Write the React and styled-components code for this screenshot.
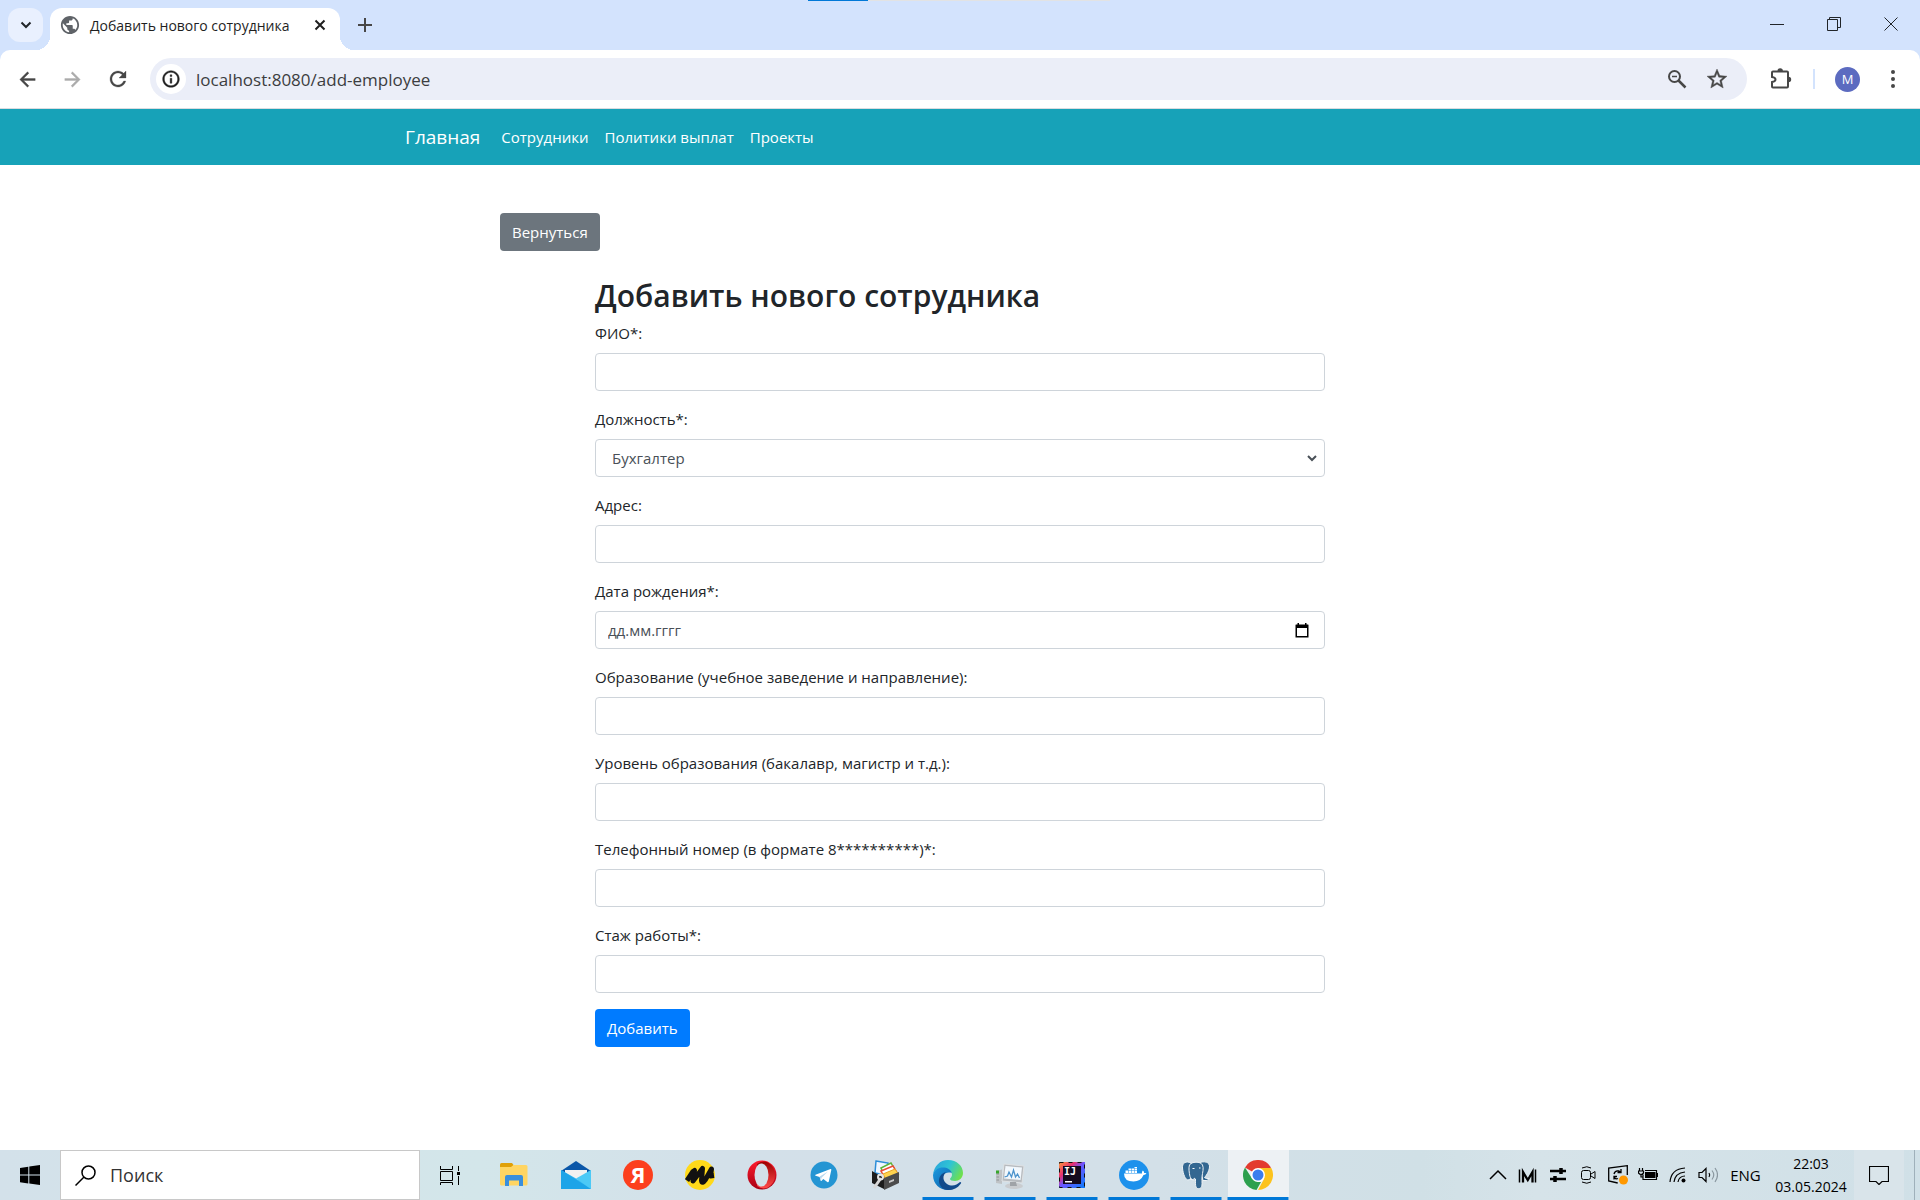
import React from 'react';
import styled, { createGlobalStyle, css } from 'styled-components';

const Global = createGlobalStyle`
  *, *::before, *::after { box-sizing: border-box; }
  body { margin: 0; background: #fff; color: #212529; }
  body, button, input, select { font-family: "Open Sans", "Noto Sans", sans-serif; }
  svg { display: block; flex: none; }
`;

const Screen = styled.div`
  min-height: 100vh;
  display: flex;
  flex-direction: column;
`;

const plainButton = css`
  display: flex;
  align-items: center;
  justify-content: center;
  padding: 0;
  border: 0;
  background: transparent;
  color: inherit;
`;

/* Browser window */
const TabStrip = styled.div`
  height: 50px;
  display: flex;
  align-items: flex-start;
  padding: 0 1px 0 8px;
  background: #d3e3fd;
  position: relative;
`;
const LoadingLine = styled.div`
  position: absolute;
  top: 0;
  left: 42.1%;
  width: 15.7%;
  height: 1px;
  background: linear-gradient(90deg, #0078d7 20%, #e2e3e4 20%);
`;
const TabMenuButton = styled.button`
  ${plainButton}
  width: 35px;
  height: 34px;
  margin-top: 8px;
  border-radius: 12px;
  background: #e9f0fe;
`;
const Tab = styled.div`
  position: relative;
  width: 290px;
  height: 42px;
  margin: 8px 0 0 7px;
  padding: 0 12px 8px 10px;
  display: flex;
  align-items: center;
  border-radius: 12px 12px 0 0;
  background: #fff;
  font-size: 14px;
  color: #1f1f1f;
  &::before, &::after {
    content: "";
    position: absolute;
    bottom: 0;
    width: 14px;
    height: 14px;
  }
  &::before { right: 100%; background: radial-gradient(circle at 0 0, transparent 14px, #fff 14px); }
  &::after { left: 100%; background: radial-gradient(circle at 100% 0, transparent 14px, #fff 14px); }
`;
const TabTitle = styled.span`
  flex: 1;
  margin-left: 10px;
  white-space: nowrap;
`;
const TabAction = styled.button`
  ${plainButton}
  width: ${p => p.$w || 16}px;
  height: ${p => p.$h || 16}px;
`;
const WindowControls = styled.div`
  display: flex;
  margin-left: auto;
`;
const WindowButton = styled.button`
  ${plainButton}
  width: 57px;
  height: 48px;
`;
const ToolbarBack = styled.div`
  background: #d3e3fd;
`;
const Toolbar = styled.div`
  height: 59px;
  display: flex;
  align-items: center;
  padding: 0 5px;
  border-radius: 10px 10px 0 0;
  border-bottom: 1px solid #dadce0;
  background: #fff;
  color: #474747;
`;
const ToolButton = styled.button`
  ${plainButton}
  width: ${p => p.$w || 45}px;
  height: 36px;
  opacity: ${p => (p.disabled ? 0.45 : 1)};
`;
const Omnibox = styled.div`
  flex: 1;
  height: 42px;
  margin: 0 11px 0 10px;
  padding: 0 10px 0 6px;
  display: flex;
  align-items: center;
  border-radius: 21px;
  background: #ebeef8;
`;
const SiteInfo = styled.button`
  ${plainButton}
  width: 30px;
  height: 30px;
  border-radius: 50%;
  background: #fff;
  color: #1f1f1f;
`;
const Address = styled.input`
  flex: 1;
  min-width: 0;
  margin-left: 10px;
  padding: 0;
  border: 0;
  outline: 0;
  background: transparent;
  font-size: 17px;
  color: #3c3d40;
`;
const Divider = styled.span`
  width: 2px;
  height: 20px;
  margin: 0 10px;
  background: #d3e3fd;
`;
const Avatar = styled.span`
  width: 25px;
  height: 25px;
  display: grid;
  place-items: center;
  border-radius: 50%;
  background: #5c6bc0;
  color: #fff;
  font-size: 13px;
`;

/* Site */
const NavBar = styled.nav`
  height: 56px;
  background: #17a2b8;
`;
const NavInner = styled.div`
  max-width: 1140px;
  height: 100%;
  margin: 0 auto;
  padding: 0 15px;
  display: flex;
  align-items: center;
`;
const Brand = styled.a`
  margin-right: 21px;
  font-size: 19px;
  line-height: 30px;
  color: #fff;
  text-decoration: none;
`;
const NavLinks = styled.div`
  display: flex;
  gap: 16px;
`;
const NavLink = styled.a`
  font-size: 15px;
  line-height: 24px;
  color: #fff;
  text-decoration: none;
`;
const Main = styled.main`
  flex: 1;
  width: 100%;
  max-width: 950px;
  margin: 0 auto;
  padding: 48px 15px;
`;
const Button = styled.button`
  height: 38px;
  padding: 0 12px;
  border: 0;
  border-radius: 4px;
  background: ${p => (p.$primary ? '#007bff' : '#6c757d')};
  color: #fff;
  font-size: 15px;
  line-height: 24px;
`;
const Form = styled.form`
  max-width: 730px;
  margin: 24px auto 0;
`;
const Title = styled.h2`
  margin: 0 0 4px;
  font-size: 30px;
  line-height: 42px;
  font-weight: 600;
`;
const Field = styled.div`
  margin-bottom: 16px;
`;
const Label = styled.label`
  display: block;
  margin-bottom: 8px;
  font-size: 15px;
  line-height: 24px;
`;
const control = css`
  width: 100%;
  height: 38px;
  border: 1px solid #ced4da;
  border-radius: 4px;
  background: #fff;
  color: #495057;
  font-size: 15px;
`;
const TextInput = styled.input`
  ${control}
  padding: 6px 12px;
`;
const SelectBox = styled.div`
  ${control}
  display: flex;
  padding-right: 4px;
`;
const Select = styled.select`
  flex: 1;
  min-width: 0;
  padding: 0 12px;
  border: 0;
  background: transparent;
  color: inherit;
  font-size: 15px;
`;
const DateBox = styled.div`
  ${control}
  display: flex;
  align-items: center;
  padding: 0 12px;
`;
const DateInput = styled.input`
  flex: 1;
  min-width: 0;
  padding: 0;
  border: 0;
  outline: 0;
  background: transparent;
  color: inherit;
  font-size: 15px;
  &::placeholder { color: #495057; opacity: 1; }
`;
const DateButton = styled.button`
  ${plainButton}
  width: 20px;
  height: 20px;
  color: #000;
`;

/* Taskbar */
const Taskbar = styled.footer`
  height: 50px;
  display: flex;
  background: linear-gradient(90deg, #d3e1ea 0%, #d3e6ea 25%, #d3e0e9 38%, #d3e0e8 60%, #d0e0e6 74%, #d6e3e9 80%, #d0e0e7 100%);
  color: #000;
`;
const StartButton = styled.button`
  ${plainButton}
  width: 60px;
`;
const SearchBox = styled.label`
  width: 360px;
  display: flex;
  align-items: center;
  padding-left: 14px;
  border: 1px solid #c8c8c8;
  background: #fff;
`;
const SearchInput = styled.input`
  flex: 1;
  min-width: 0;
  margin-left: 14px;
  padding: 0;
  border: 0;
  outline: 0;
  font-size: 18px;
  &::placeholder { color: #333; opacity: 1; }
`;
const Apps = styled.div`
  display: flex;
  margin-left: 3px;
`;
const AppButton = styled.button`
  ${plainButton}
  width: 62px;
  position: relative;
  background: ${p => (p.$active ? 'linear-gradient(#edf1f4, #edf1f4) center / 61px 100% no-repeat' : 'transparent')};
  &::after {
    content: "";
    display: ${p => (p.$running || p.$active ? 'block' : 'none')};
    position: absolute;
    bottom: 0;
    left: 50%;
    width: ${p => (p.$active ? 61 : 51)}px;
    height: 3px;
    transform: translateX(-50%);
    background: #0078d7;
  }
`;
const Tray = styled.div`
  display: flex;
  align-items: stretch;
  margin-left: auto;
`;
const TrayButton = styled.button`
  ${plainButton}
  width: ${p => p.$w || 30}px;
  font-size: 15px;
`;
const Clock = styled.button`
  ${plainButton}
  width: 86px;
  flex-direction: column;
  font-size: 14px;
  line-height: 23px;
`;
const Notifications = styled(TrayButton)`
  margin-right: 10px;
  background: #d9e4ea;
`;
const ShowDesktop = styled.button`
  ${plainButton}
  width: 6px;
  border-left: 1px solid #9fb0ba;
`;

const Glyph = ({ d, size = 24, bold = 0 }) => (
  <svg width={size} height={size} viewBox="0 0 24 24" fill="currentColor" stroke="currentColor" strokeWidth={bold}><path d={d} /></svg>
);
const Line = ({ w = 20, h = 20, sw = 1, children }) => (
  <svg width={w} height={h} viewBox={`0 0 ${w} ${h}`} fill="none" stroke="currentColor" strokeWidth={sw}>{children}</svg>
);
const AppSvg = ({ children }) => <svg width="30" height="30" viewBox="0 0 30 30">{children}</svg>;

const paths = {
  back: 'M20 11H7.83l5.59-5.59L12 4l-8 8 8 8 1.41-1.41L7.83 13H20v-2z',
  forward: 'M12 4l-1.41 1.41L16.17 11H4v2h12.17l-5.58 5.59L12 20l8-8z',
  reload: 'M17.65 6.35C16.2 4.9 14.21 4 12 4c-4.42 0-7.99 3.58-7.99 8s3.57 8 7.99 8c3.73 0 6.84-2.55 7.73-6h-2.08c-.82 2.33-3.04 4-5.65 4-3.31 0-6-2.69-6-6s2.69-6 6-6c1.66 0 3.14.69 4.22 1.78L13 11h7V4l-2.35 2.35z',
  info: 'M11 7h2v2h-2zm0 4h2v6h-2zm1-9C6.48 2 2 6.48 2 12s4.48 10 10 10 10-4.48 10-10S17.52 2 12 2zm0 18c-4.41 0-8-3.59-8-8s3.59-8 8-8 8 3.59 8 8-3.59 8-8 8z',
  star: 'M22 9.24l-7.19-.62L12 2 9.19 8.63 2 9.24l5.46 4.73L5.82 21 12 17.27 18.18 21l-1.63-7.03L22 9.24zM12 15.4l-3.76 2.27 1-4.28-3.32-2.88 4.38-.38L12 6.1l1.71 4.04 4.38.38-3.32 2.88 1 4.28L12 15.4z',
  globe: 'M12 2C6.48 2 2 6.48 2 12s4.48 10 10 10 10-4.48 10-10S17.52 2 12 2zm-1 17.93c-3.95-.49-7-3.85-7-7.93 0-.62.08-1.21.21-1.79L9 15v1c0 1.1.9 2 2 2v1.93zm6.9-2.54c-.26-.81-1-1.39-1.9-1.39h-1v-3c0-.55-.45-1-1-1H8v-2h2c.55 0 1-.45 1-1V7h2c1.1 0 2-.9 2-2v-.41c2.93 1.19 5 4.06 5 7.41 0 2.08-.8 3.97-2.1 5.39z',
};

const icons = {
  explorer: (
    <AppSvg>
      <path d="M1 4.500q0-1.500 1.500-1.500H13l1.500 2-1.500 3H1z" fill="#e0a008" />
      <path d="M1 7h11l2.500-2H27q1.500 0 1.500 1.500V24q0 1.500-1.500 1.500H2.500Q1 25.500 1 24z" fill="#ffd562" />
      <path d="M6 26V17q0-2 2-2h14q2 0 2 2v9h-4v-5.500h-10V26z" fill="#3a8fdc" />
    </AppSvg>
  ),
  mail: (
    <AppSvg>
      <path d="M0 11 15 1l15 10v4H0z" fill="#0a57a8" />
      <path d="M4 10h22v10H4z" fill="#f1f1f1" />
      <path d="M0 10v19h30V10L16.500 19.500 15 18.500z" fill="#35b9f1" />
      <path d="M0 10 30 29H0z" fill="#1da4e8" />
      <path d="M30 10v19L15 18.500z" fill="#4cc9f6" />
    </AppSvg>
  ),
  yandex: (
    <AppSvg>
      <circle cx="15" cy="15" r="15" fill="#fc3f1d" />
      <text x="15" y="23" textAnchor="middle" fontSize="22" fontWeight="700" fontFamily="Open Sans, sans-serif" fill="#fff">Я</text>
    </AppSvg>
  ),
  music: (
    <AppSvg>
      <circle cx="15" cy="15" r="15" fill="#ffd91a" />
      <path d="M2 20.500 8 11.500 9.500 10.500 8 21 17.500 8.500 16.500 20.500 Q17 24.500 20.500 19.500L26.500 9 25.500 16 29 15.500" fill="none" stroke="#111" strokeWidth="5" strokeLinejoin="round" />
    </AppSvg>
  ),
  opera: (
    <AppSvg>
      <defs>
        <linearGradient id="op1" x1="0" y1="0" x2="0" y2="1"><stop offset="0" stopColor="#ff1b2d" /><stop offset="1" stopColor="#a70014" /></linearGradient>
        <linearGradient id="op2" x1="0" y1="0" x2="0" y2="1"><stop offset="0" stopColor="#9c0000" /><stop offset="1" stopColor="#ff4b4b" /></linearGradient>
      </defs>
      <circle cx="15" cy="15" r="14.500" fill="url(#op1)" />
      <path d="M10 4Q16 0 21 2.500A14.500 14.500 0 0 1 21 27.500Q15 30 10 26z" fill="url(#op2)" />
      <ellipse cx="14.500" cy="15" rx="7" ry="11.500" fill="#d3e0e9" />
    </AppSvg>
  ),
  telegram: (
    <AppSvg>
      <circle cx="15" cy="15" r="13.500" fill="#2495d3" />
      <path d="M6.500 14.800 21.500 9q1-.2.800 1l-2.500 11.500q-.4 1-1.500.4l-4-3-2 2q-.5.400-.7-.300l-1-3.700-4-1.200q-1-.4-.1-.9z" fill="#fff" />
      <path d="M10.700 16.500 19 11.500l-6.500 6.200-.6 3z" fill="#b9d9ee" />
    </AppSvg>
  ),
  organizer: (
    <AppSvg>
      <path d="m5 1 12 2-3 12-10-2z" fill="#eef6ff" stroke="#2c8ed8" strokeWidth="1.500" />
      <path d="m10 8 10-5 4 7-10 6z" fill="#fff" stroke="#5eb53c" strokeWidth="1.500" />
      <path d="m10 11 12-5 4 7-12 5z" fill="#fff" stroke="#e94b35" strokeWidth="1.500" />
      <path d="m12 14 12-5 4 6-13 5z" fill="#ffd34f" stroke="#e8a522" />
      <path d="m1 11 12 7v11L1 23z" fill="#1c1c1c" />
      <path d="m13 18 15-6v11l-15 7z" fill="#4c4c4c" />
      <path d="m18 21 5-2v2l-5 2z" fill="#ccc" />
      <path d="m3 28 7-10" stroke="#d8d8d8" strokeWidth="3" />
      <circle cx="9.500" cy="17" r="2.500" fill="none" stroke="#e5e5e5" strokeWidth="2" />
    </AppSvg>
  ),
  edge: (
    <AppSvg>
      <defs>
        <linearGradient id="ed1" x1="0" y1=".2" x2="1" y2=".6"><stop offset="0" stopColor="#2aa5dc" /><stop offset=".5" stopColor="#2fc4d4" /><stop offset="1" stopColor="#6fe04c" /></linearGradient>
        <linearGradient id="ed2" x1="0" y1="0" x2="1" y2="1"><stop offset="0" stopColor="#1b9be0" /><stop offset="1" stopColor="#0c59a4" /></linearGradient>
      </defs>
      <path d="M0 15C1 6 7 0 15 0c9 0 15 6 15 13 0 5-4 8-8 8-3 0-5-1-5-2 0-1 2-2 2-4 0-4-4-7-9-7C5 8 1 11 0 15z" fill="url(#ed1)" />
      <path d="M0 15C1 10 5 7.500 10 7.500c4 0 8 2 8.800 5.500C12 11 8 16 10 21c2 5 7 7 11 6.500Q18 30 15 30C7 30 0 24 0 15z" fill="url(#ed2)" />
      <path d="M13 12c-4 4-3 9 1 12 5 3 10 1 13-2q2 0 .5 2c-3 4-7 6-12 6C9 30 6 25 6 21c0-5 3-8 7-9z" fill="#114a8b" />
    </AppSvg>
  ),
  monitor: (
    <AppSvg>
      <path d="m1 11 6-1.500V24l-6-1z" fill="#bfc3c6" />
      <path d="M1.500 14H4M1.500 17H4M1.500 20H4" stroke="#8f9498" />
      <path d="M1 10.500h3v3H1z" fill="#37a72d" />
      <path d="m9 4 20 2-2 17-20-2z" fill="#b7bbbf" stroke="#dfe2e4" />
      <path d="m10.500 6 16.500 1.500-1.500 12.500L9 18.500z" fill="#f2f8fd" />
      <path d="m9.500 17 3-1 1.500-4 2.500 5 2-7 2 7 2-3 2 4" fill="none" stroke="#4c93cc" strokeWidth="1.300" />
      <ellipse cx="19" cy="26" rx="9" ry="3" fill="#c9cccf" />
      <path d="M15 22h6l1 4h-7z" fill="#9fa3a7" />
    </AppSvg>
  ),
  idea: (
    <AppSvg>
      <defs>
        <linearGradient id="ij" x1="0" y1="0" x2="1" y2="1"><stop offset="0" stopColor="#fc9a3c" /><stop offset=".3" stopColor="#e82f6e" /><stop offset=".5" stopColor="#6b57ff" /><stop offset="1" stopColor="#087cfa" /></linearGradient>
      </defs>
      <path d="M2 2h26v26H2z" fill="url(#ij)" />
      <path d="M2.500 2.500h25v25h-25z" fill="none" stroke="#111" strokeDasharray="4 5" />
      <path d="M6 6h18v18H6z" fill="#140a1e" />
      <text x="7" y="15" fontSize="10" fontWeight="700" fontFamily="DejaVu Sans Mono, monospace" fill="#fff">IJ</text>
      <path d="M8 21h7v1.500H8z" fill="#fff" />
    </AppSvg>
  ),
  docker: (
    <AppSvg>
      <circle cx="15" cy="15" r="15" fill="#1d91ec" />
      <path d="M5 13.500h18q-.5-1.500.8-3 1.400.9 1.400 2.500 1.400-.3 2.300.3-.8 1.700-3 1.700-2.800 6.500-10 6.500-9.500 0-9.500-8z" fill="#fff" />
      <path d="M6.500 10.500h2.500v2.500H6.500zM9.500 10.500h2.500v2.500H9.500zM12.500 10.500H15v2.500h-2.500zM15.500 10.500H18v2.500h-2.500zM9.500 8.500h2.500V10H9.500zM12.500 8.500H15V10h-2.500zM15.500 8.500H18V10h-2.500zM15.500 7H18v1h-2.500z" fill="#fff" />
    </AppSvg>
  ),
  postgres: (
    <AppSvg>
      <g fill="#336791" stroke="#eef3f6" strokeWidth="1">
        <path d="M10 3C5 .5 1 3 1.500 8c.5 6 3 12 5.500 12 2 0 3-2.500 3.500-4z" />
        <path d="M18 3c5-2.500 11-1 10.500 4-.4 5-4 9.500-5 10.500q1 1.500 5 1-2 3-6.500 2z" />
        <path d="M8.500 5c2-3.500 11-4 13 0 1.500 3 0 8-.5 11.500-.3 2 .5 9-.5 10.500-1 2-4.500 2.500-5.500 0-.7-2-.5-5-.5-8-2 2-4.500.5-5.500-2.500-1-4-1.500-9-.5-11.500z" />
      </g>
      <path d="M11.500 8.500h2M18 8h1.500" stroke="#fff" strokeWidth="1.200" />
      <path d="M9 19q3 2 5-1" fill="none" stroke="#eef3f6" />
    </AppSvg>
  ),
  chrome: (
    <AppSvg>
      <path d="M15 15 2 7.500A15 15 0 0 1 28 7.500z" fill="#e33b2e" />
      <path d="M15 8h13.300A15 15 0 0 1 15 30l6-11z" fill="#fcc31e" />
      <path d="M2 7.500 9 18.500 15 22l3 0-4.500 8A15 15 0 0 1 2 7.500z" fill="#2da04e" />
      <circle cx="15" cy="15" r="7" fill="#fff" />
      <circle cx="15" cy="15" r="5.500" fill="#3b7ded" />
    </AppSvg>
  ),
};

const apps = [
  ['explorer', 'Проводник'], ['mail', 'Почта'], ['yandex', 'Яндекс'], ['music', 'Музыка'], ['opera', 'Opera'],
  ['telegram', 'Telegram'], ['organizer', 'Органайзер'], ['edge', 'Edge', 'running'], ['monitor', 'Монитор', 'running'],
  ['idea', 'IntelliJ IDEA', 'running'], ['docker', 'Docker', 'running'], ['postgres', 'PostgreSQL', 'running'],
  ['chrome', 'Chrome', 'active'],
];

const trayIcons = [
  ['Скрытые значки', <Line><path d="m2 14 8-8 8 8" strokeWidth="1.500" /></Line>],
  ['Монитор', <Line><path d="M1.500 4.500v13M17.500 4.500v13" strokeWidth="1.500" /><path d="M5 17.500V7l4.800 8L14.500 7v10.500" strokeWidth="2.300" /></Line>],
  ['Настройки', <Line><path d="M2 6h16M2 14h16" strokeWidth="2.500" /><path d="M13 3v6M7 11v6" strokeWidth="3.500" /></Line>],
  ['Камера', <Line><rect x="3.500" y="5.500" width="9" height="9" rx="2" /><path d="m13 9 4-2.500v7L13 11M4 3q5-2.500 9 0M4 17q5 2.500 9 0" /></Line>],
  ['Обновления', <Line><path d="M19.300 10V.700L.7 3v13l9 2" strokeWidth="1.300" /><path d="M6 9q1-4 5-3l2 1m0-3v3.500H9.500M6 14.500v-3h3M6 12.500q2 2 4 1" strokeWidth="1.300" /><circle cx="15.500" cy="15" r="4.500" fill="#ff9800" stroke="none" /></Line>],
  ['Батарея', <Line><rect x="7" y="7" width="10.500" height="6" fill="#000" stroke="none" /><path d="M5 9.500v5h13.500v-9H7M19.500 8v4M1.500 3v3M4.500 3v3M.5 6h5v2q-2.500 3-5 0zM3 9v3h2" strokeWidth="1.200" /></Line>],
  ['Сеть', <Line><path d="M2 17Q3 4 17 3M6 17Q7 8 17 7M10 17q1-6 7-6" strokeWidth="1.200" /><circle cx="15.500" cy="15.500" r="2" fill="#000" stroke="none" /></Line>],
  ['Громкость', <Line><path d="M1 7.500h3l4-4v13l-4-4H1zM11 8q1.500 2 0 4" strokeWidth="1.200" /><path d="M14 5.500q3.500 4.500 0 9M17 3q5 7 0 14" stroke="#8a979f" strokeWidth="1.200" /></Line>],
];

const fields = [
  { id: 'name', label: 'ФИО*:' },
  { id: 'position', label: 'Должность*:', type: 'select' },
  { id: 'address', label: 'Адрес:' },
  { id: 'birth', label: 'Дата рождения*:', type: 'date' },
  { id: 'education', label: 'Образование (учебное заведение и направление):' },
  { id: 'degree', label: 'Уровень образования (бакалавр, магистр и т.д.):' },
  { id: 'phone', label: 'Телефонный номер (в формате 8**********)*:' },
  { id: 'experience', label: 'Стаж работы*:' },
];

function Control({ id, type }) {
  if (type === 'select') {
    return <SelectBox><Select id={id}><option>Бухгалтер</option></Select></SelectBox>;
  }
  if (type === 'date') {
    return (
      <DateBox>
        <DateInput id={id} placeholder="дд.мм.гггг" />
        <DateButton type="button" aria-label="Календарь">
          <svg width="14" height="15" viewBox="0 0 14 15"><path d="M2.500 0H4v1.500h6V0h1.500v1.500H13q.5 0 .5.500v12.500H.5V2q0-.5.5-.5h1.500zM2 5v8h10V5z" fill="currentColor" fillRule="evenodd" /></svg>
        </DateButton>
      </DateBox>
    );
  }
  return <TextInput id={id} />;
}

export default function App() {
  return (
    <Screen>
      <Global />
      <header>
        <TabStrip>
          <LoadingLine />
          <TabMenuButton aria-label="Поиск вкладок">
            <Line w={12} h={8} sw={2}><path d="m1.500 1.500 4.500 4.500 4.500-4.500" /></Line>
          </TabMenuButton>
          <Tab>
            <svg width="20" height="20" viewBox="1 1 22 22" fill="#5f6368"><path d={paths.globe} /></svg>
            <TabTitle>Добавить нового сотрудника</TabTitle>
            <TabAction aria-label="Закрыть вкладку"><Line w={12} h={12} sw={2}><path d="m1.500 1.500 9 9m0-9-9 9" /></Line></TabAction>
          </Tab>
          <TabAction $w={50} $h={50} aria-label="Новая вкладка"><Line w={14} h={14} sw={2}><path d="M7 0v14M0 7h14" stroke="#474747" /></Line></TabAction>
          <WindowControls>
            <WindowButton aria-label="Свернуть"><Line w={14} h={14}><path d="M0 7.500h14" /></Line></WindowButton>
            <WindowButton aria-label="Восстановить"><Line w={14} h={14}><path d="M.5 2.500h10v11H.5zM2.500 2.500v-2h11v10h-3" /></Line></WindowButton>
            <WindowButton aria-label="Закрыть"><Line w={14} h={14}><path d="m.5.500 13 13m0-13-13 13" /></Line></WindowButton>
          </WindowControls>
        </TabStrip>
        <ToolbarBack>
          <Toolbar>
            <ToolButton aria-label="Назад"><Glyph d={paths.back} size={23} bold={0.4} /></ToolButton>
            <ToolButton aria-label="Вперёд" disabled><Glyph d={paths.forward} size={23} bold={0.4} /></ToolButton>
            <ToolButton aria-label="Обновить"><Glyph d={paths.reload} size={24} bold={0.3} /></ToolButton>
            <Omnibox>
              <SiteInfo aria-label="Сведения о сайте"><Glyph d={paths.info} size={20} bold={0.5} /></SiteInfo>
              <Address aria-label="Адрес" defaultValue="localhost:8080/add-employee" />
              <ToolButton $w={40} aria-label="Масштаб"><Line sw={2}><circle cx="7.500" cy="7.500" r="5.500" /><path d="m11.500 11.500 7 7" strokeWidth="2.500" /><path d="M5 7.500h5" strokeWidth="1.500" /></Line></ToolButton>
              <ToolButton $w={40} aria-label="В закладки"><Glyph d={paths.star} size={24} bold={0.4} /></ToolButton>
            </Omnibox>
            <ToolButton aria-label="Расширения">
              <Line w={22} h={22} sw={2}>
                <path d="M2 4.500q0-1 1-1h14q1 0 1 1v14q0 1-1 1H3q-1 0-1-1v-4.500q3.500-.5 3.500-2.500T2 9z" />
                <path d="M7.500 3a2.700 2.700 0 0 1 5.400 0zM18.500 8.800a2.700 2.700 0 0 1 0 5.400z" fill="currentColor" stroke="none" />
              </Line>
            </ToolButton>
            <Divider />
            <ToolButton aria-label="Профиль"><Avatar>M</Avatar></ToolButton>
            <ToolButton aria-label="Меню">
              <svg width="6" height="18" viewBox="0 0 6 18" fill="currentColor"><circle cx="3" cy="2" r="2" /><circle cx="3" cy="9" r="2" /><circle cx="3" cy="16" r="2" /></svg>
            </ToolButton>
          </Toolbar>
        </ToolbarBack>
      </header>

      <NavBar>
        <NavInner>
          <Brand href="#">Главная</Brand>
          <NavLinks>
            <NavLink href="#">Сотрудники</NavLink>
            <NavLink href="#">Политики выплат</NavLink>
            <NavLink href="#">Проекты</NavLink>
          </NavLinks>
        </NavInner>
      </NavBar>

      <Main>
        <Button type="button">Вернуться</Button>
        <Form onSubmit={e => e.preventDefault()}>
          <Title>Добавить нового сотрудника</Title>
          {fields.map(f => (
            <Field key={f.id}>
              <Label htmlFor={f.id}>{f.label}</Label>
              <Control id={f.id} type={f.type} />
            </Field>
          ))}
          <Button $primary>Добавить</Button>
        </Form>
      </Main>

      <Taskbar>
        <StartButton aria-label="Пуск">
          <svg width="20" height="20" viewBox="0 0 20 20"><path d="M0 3 8.300 1.700V9.500H0zM9.300 1.500 20 0v9.500H9.300zM0 10.500h8.300v8L0 17.300zM9.300 10.500H20V20L9.300 18.600z" /></svg>
        </StartButton>
        <SearchBox>
          <Line w={21} h={21} sw={1.5}><circle cx="13.500" cy="7.500" r="6.500" /><path d="m9 12-8.500 8.500" /></Line>
          <SearchInput placeholder="Поиск" aria-label="Поиск" />
        </SearchBox>
        <StartButton aria-label="Представление задач">
          <Line w={20} h={20}><path d="M.5 1v3.500h12V1M.500 6.500h12v9H.5zM.500 20v-2.500h12V20M18.500 1v5M18.500 11v9" /><path d="M17 7h3v3h-3z" fill="#000" stroke="none" /></Line>
        </StartButton>
        <Apps>
          {apps.map(([key, name, state]) => (
            <AppButton key={key} aria-label={name} $running={state === 'running'} $active={state === 'active'}>{icons[key]}</AppButton>
          ))}
        </Apps>
        <Tray>
          {trayIcons.map(([name, icon]) => <TrayButton key={name} aria-label={name}>{icon}</TrayButton>)}
          <TrayButton $w={45}>ENG</TrayButton>
          <Clock><span>22:03</span><span>03.05.2024</span></Clock>
          <Notifications $w={50} aria-label="Уведомления"><Line><path d="M.5 1.500h19v15h-6.500l-3 3-3-3H.5z" strokeWidth="1.200" /></Line></Notifications>
          <ShowDesktop aria-label="Свернуть все окна" />
        </Tray>
      </Taskbar>
    </Screen>
  );
}
